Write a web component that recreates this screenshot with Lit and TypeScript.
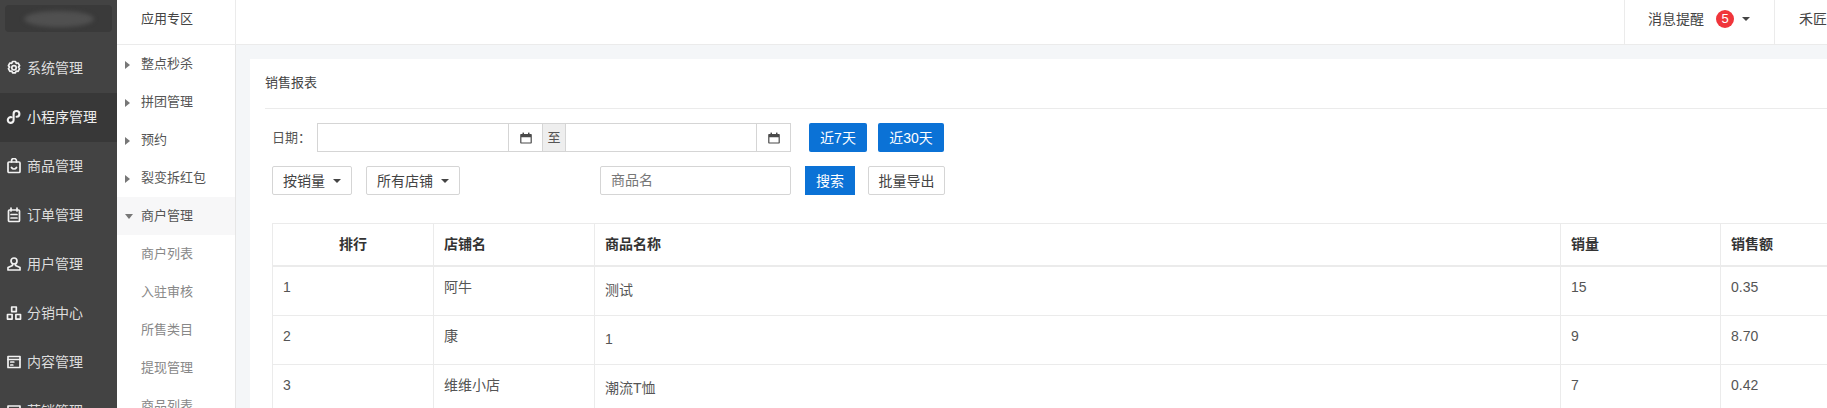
import { LitElement, html, css, svg } from "lit";
import { customElement } from "lit/decorators.js";

const stroke = (c: unknown) => html`<svg class="ico" viewBox="0 0 16 16" fill="none" stroke="currentColor" stroke-width="1.7" stroke-linecap="round" stroke-linejoin="round">${c}</svg>`;

const icons = [
  stroke(svg`<path d="M6.500 1.500h3l.7 1.800 1.900-.3 1.500 2.600-1.200 1.500 1.200 1.600-1.500 2.600-1.900-.3-.7 1.800h-3l-.7-1.800-1.900.3-1.500-2.600 1.200-1.600-1.200-1.500L3.900 3l1.900.3z"/><circle cx="8" cy="7.800" r="2.200"/>`),
  stroke(svg`<path d="M5.400 8.200A2.900 2.900 0 1 0 7.600 11V5a2.900 2.900 0 1 1 3 2.800" stroke-width="2.100"/>`),
  stroke(svg`<rect x="2" y="4" width="12" height="10.500" rx="1"/><path d="M5.500 4V3a2.500 2.500 0 0 1 5 0v1M5.500 9.500c1 2 4 2 5 0"/>`),
  stroke(svg`<rect x="2.500" y="3" width="11" height="11.500" rx="1"/><path d="M5 1v3M11 1v3M5 7.500h6M5 11h6"/>`),
  stroke(svg`<circle cx="8" cy="5" r="3"/><path d="M6.500 8v1.500L2 11.500v2.500h12v-2.500L9.500 9.500V8"/>`),
  stroke(svg`<rect x="5.700" y="2" width="4.600" height="4.600"/><rect x="1.500" y="9.500" width="4.600" height="4.600"/><rect x="9.900" y="9.500" width="4.600" height="4.600"/>`),
  stroke(svg`<rect x="2" y="2.500" width="12" height="11"/><path d="M2 5.500h12M4.800 8h3M4.800 11h2"/>`),
  stroke(svg`<rect x="2" y="3" width="12" height="10"/><path d="M2 6.500h12"/>`),
];

const mainNav = ["系统管理", "小程序管理", "商品管理", "订单管理", "用户管理", "分销中心", "内容管理", "营销管理"];
const groups = ["整点秒杀", "拼团管理", "预约", "裂变拆红包"];
const children = ["商户列表", "入驻审核", "所售类目", "提现管理", "商品列表"];
const rows = [
  ["1", "阿牛", "测试", "15", "0.35"],
  ["2", "康", "1", "9", "8.70"],
  ["3", "维维小店", "潮流T恤", "7", "0.42"],
];

const calendar = html`<svg class="cal" viewBox="0 0 12 12" fill="#4a4a4a"><path d="M1 2h10a.8.8 0 0 1 .8.800v8a.8.8 0 0 1-.8.800H1a.8.8 0 0 1-.8-.8v-8A.8.8 0 0 1 1 2zm.4 3.200v5.200h9.200V5.200z"/><rect x="2.500" y=".6" width="1.500" height="2.400"/><rect x="8" y=".6" width="1.500" height="2.400"/></svg>`;

@customElement("app-root")
export class AppRoot extends LitElement {
  static styles = css`
    :host { display: block; width: 1827px; height: 408px; overflow: hidden; background: #f4f6f8;
      font: 14px/20px "Liberation Sans", "Noto Sans CJK SC", sans-serif; color: #555; }
    .shell { display: flex; height: 408px; }
    .aside { width: 117px; flex: none; background: #434343; color: #ddd; }
    .logo-wrap { height: 44px; box-sizing: border-box; padding: 5px 5px 12px; }
    .logo { height: 27px; border-radius: 4px; background: #3a3a3a; display: flex; align-items: center; justify-content: center; overflow: hidden; }
    .smudge { width: 70px; height: 16px; border-radius: 50%; background: #505050; filter: blur(2px); }
    .main-item { height: 49px; box-sizing: border-box; display: flex; align-items: center; padding: 0 0 2px 6px; gap: 5px; white-space: nowrap; }
    .main-item.active { background: #383838; color: #eee; }
    .ico { width: 16px; height: 16px; flex: none; color: #f2f2f2; }
    .right { flex: 1; min-width: 0; display: flex; flex-direction: column; }
    .header { height: 44px; flex: none; display: flex; background: #fff; border-bottom: 1px solid #ebebeb; color: #444; }
    .zone { width: 119px; box-sizing: border-box; flex: none; border-right: 1px solid #ebebeb; padding: 9px 0 0 24px; font-size: 13px; }
    .spacer { flex: 1; }
    .msg { width: 150px; flex: none; box-sizing: border-box; border-left: 1px solid #ebebeb; display: flex; align-items: center; padding: 0 0 6px 23px; }
    .badge { width: 18px; height: 18px; border-radius: 50%; background: #f0353b; color: #fff; font-size: 13px; line-height: 18px; text-align: center; margin-left: 12px; }
    .caret { width: 0; height: 0; border: 4px solid transparent; border-top-color: #444; border-bottom: 0; display: inline-block; flex: none; }
    .msg .caret { margin-left: 8px; }
    .user { width: 53px; flex: none; box-sizing: border-box; border-left: 1px solid #ebebeb; padding: 9px 0 0 24px; white-space: nowrap; overflow: hidden; }
    .body { flex: 1; display: flex; min-height: 0; }
    .sub { width: 119px; box-sizing: border-box; flex: none; background: #fff; border-right: 1px solid #e6e6e6; font-size: 13px; color: #555; }
    .sub-item { height: 38px; display: flex; align-items: center; padding-left: 8px; gap: 8px; white-space: nowrap; }
    .sub-item.open { background: #f7f7f8; }
    .arrow { width: 0; height: 0; flex: none; border: 4px solid transparent; border-left: 5px solid #777; border-right: 0; margin: 2px 3px 0 0; }
    .open .arrow { border: 4px solid transparent; border-top: 5px solid #777; border-bottom: 0; margin: 0; width: 0; }
    .child { height: 38px; display: flex; align-items: center; padding-left: 24px; color: #888; white-space: nowrap; }
    .content { flex: 1; min-width: 0; padding: 14px 0 0 14px; }
    .card { background: #fff; height: 100%; overflow: hidden; box-sizing: border-box; padding-left: 15px; }
    .title { height: 49px; line-height: 48px; border-bottom: 1px solid #ebebeb; font-size: 13px; color: #444; }
    .form { padding: 14px 0 0 7px; }
    .line { display: flex; align-items: center; height: 29px; }
    .line + .line { margin-top: 14px; }
    .lab { width: 45px; flex: none; font-size: 13px; }
    .date { display: flex; height: 29px; box-sizing: border-box; border: 1px solid #d5d5d5; flex: none; }
    .date-in { width: 190px; }
    .date-add { width: 33px; border-left: 1px solid #d5d5d5; display: flex; align-items: center; justify-content: center; }
    .cal { width: 12px; height: 12px; }
    .to { width: 22px; background: #eee; border-left: 1px solid #d5d5d5; border-right: 1px solid #d5d5d5; font-size: 13px; text-align: center; line-height: 27px; }
    .btn { height: 29px; box-sizing: border-box; display: flex; align-items: center; justify-content: center; border-radius: 2px; flex: none; white-space: nowrap; }
    .primary { background: #0b72d6; color: #fff; }
    .plain { background: #fff; border: 1px solid #d5d5d5; color: #444; }
    .d7 { width: 58px; margin-left: 18px; }
    .d30 { width: 66px; margin-left: 11px; }
    .sel { gap: 8px; }
    .s1 { width: 80px; }
    .s2 { width: 94px; margin-left: 14px; }
    .name { width: 191px; height: 29px; box-sizing: border-box; border: 1px solid #d5d5d5; border-radius: 2px; color: #777; padding: 3px 10px; margin-left: 140px; flex: none; }
    .search { width: 50px; margin-left: 14px; border-radius: 0; }
    .export { width: 77px; margin-left: 13px; }
    table { border-collapse: collapse; table-layout: fixed; width: 1640px; margin-top: 28px; }
    th, td { border: 1px solid #ebebeb; padding: 10px 10px 0; text-align: left; vertical-align: top; box-sizing: border-box; }
    th { height: 42px; border-bottom-width: 2px; color: #333; font-weight: 700; padding-top: 10px; }
    td { height: 49px; }
    tbody tr:first-child td { height: 50px; }
    th.rank { text-align: center; }
    .w1, .w2 { width: 161px; }
    .w3 { width: 966px; }
    .w4 { width: 160px; }
    .low { display: block; padding-top: 3px; }
  `;

  render() {
    return html`<div class="shell">
      <div class="aside">
        <div class="logo-wrap"><div class="logo"><div class="smudge"></div></div></div>
        ${mainNav.map((t, i) => html`<div class="main-item ${i === 1 ? "active" : ""}">${icons[i]}<span>${t}</span></div>`)}
      </div>
      <div class="right">
        <div class="header">
          <div class="zone">应用专区</div>
          <div class="spacer"></div>
          <div class="msg"><span>消息提醒</span><span class="badge">5</span><span class="caret"></span></div>
          <div class="user">禾匠</div>
        </div>
        <div class="body">
          <div class="sub">
            ${groups.map((g) => html`<div class="sub-item"><span class="arrow"></span><span>${g}</span></div>`)}
            <div class="sub-item open"><span class="arrow"></span><span>商户管理</span></div>
            ${children.map((c) => html`<div class="child">${c}</div>`)}
          </div>
          <div class="content">
            <div class="card">
              <div class="title">销售报表</div>
              <div class="form">
                <div class="line">
                  <span class="lab">日期：</span>
                  <div class="date">
                    <div class="date-in"></div><div class="date-add">${calendar}</div>
                    <div class="to">至</div>
                    <div class="date-in"></div><div class="date-add">${calendar}</div>
                  </div>
                  <div class="btn primary d7">近7天</div>
                  <div class="btn primary d30">近30天</div>
                </div>
                <div class="line">
                  <div class="btn plain sel s1">按销量<span class="caret"></span></div>
                  <div class="btn plain sel s2">所有店铺<span class="caret"></span></div>
                  <div class="name">商品名</div>
                  <div class="btn primary search">搜索</div>
                  <div class="btn plain export">批量导出</div>
                </div>
                <table>
                  <thead><tr>
                    <th class="rank w1">排行</th><th class="w2">店铺名</th><th class="w3">商品名称</th><th class="w4">销量</th><th>销售额</th>
                  </tr></thead>
                  <tbody>
                    ${rows.map((r) => html`<tr><td>${r[0]}</td><td>${r[1]}</td><td><span class="low">${r[2]}</span></td><td>${r[3]}</td><td>${r[4]}</td></tr>`)}
                  </tbody>
                </table>
              </div>
            </div>
          </div>
        </div>
      </div>
    </div>`;
  }
}
